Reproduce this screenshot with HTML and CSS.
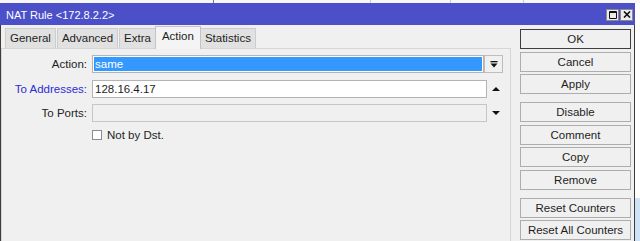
FILE: index.html
```html
<!DOCTYPE html>
<html lang="en">
<head>
  <meta charset="UTF-8" />
  <title>NAT Rule</title>
  <link rel="stylesheet" href="styles.css">
</head>
<body>

  <div class="backdrop-top"></div>
  <div class="screen">
    <div class="window">
      <div class="titlebar">
        <span class="title">NAT Rule &lt;172.8.2.2&gt;</span>
        <div class="title-buttons">
          <span class="tbtn">
            <svg width="8" height="8" viewBox="0 0 8 8"><path d="M0.5 0.5h7v7h-7z M0.5 1.5h7" fill="none" stroke="#111" stroke-width="1"/></svg>
          </span>
          <span class="tbtn">
            <svg width="8" height="7" viewBox="0 0 8 7"><path d="M1 0.5l6 6M7 0.5l-6 6" fill="none" stroke="#111" stroke-width="1.6"/></svg>
          </span>
        </div>
      </div>

      <div class="body">
        <div class="tabs-area">
          <div class="tabs">
            <span class="tab">General</span>
            <span class="tab">Advanced</span>
            <span class="tab">Extra</span>
            <span class="tab active">Action</span>
            <span class="tab">Statistics</span>
          </div>

          <div class="pane">
            <div class="row">
              <span class="label">Action:</span>
              <div class="field select"><span class="selected">same</span></div>
              <span class="drop-btn">
                <svg width="8" height="7" viewBox="0 0 8 7"><rect x="0.5" y="0" width="7" height="1.3" fill="#111"/><path d="M0.5 2.5h7L4 6.5z" fill="#111"/></svg>
              </span>
            </div>
            <div class="row">
              <span class="label link">To Addresses:</span>
              <div class="field">128.16.4.17</div>
              <span class="spin">
                <svg width="8" height="4" viewBox="0 0 8 4"><path d="M0 4h8L4 0z" fill="#111"/></svg>
              </span>
            </div>
            <div class="row">
              <span class="label">To Ports:</span>
              <div class="field disabled"></div>
              <span class="spin">
                <svg width="8" height="4" viewBox="0 0 8 4"><path d="M0 0h8L4 4z" fill="#111"/></svg>
              </span>
            </div>
            <div class="check-row">
              <span class="checkbox"></span>
              <span>Not by Dst.</span>
            </div>
          </div>
        </div>

        <div class="buttons">
          <div class="btn default">OK</div>
          <div class="btn">Cancel</div>
          <div class="btn">Apply</div>
          <div class="btn group-gap">Disable</div>
          <div class="btn">Comment</div>
          <div class="btn">Copy</div>
          <div class="btn">Remove</div>
          <div class="btn group-gap">Reset Counters</div>
          <div class="btn">Reset All Counters</div>
        </div>
      </div>
    </div>
    <div class="backdrop-side"></div>
  </div>

</body>
</html>
```

FILE: styles.css
```css
* { box-sizing: border-box; }
html, body { margin: 0; height: 241px; overflow: hidden; }
body { background: #f6f6f6; font-family: "Liberation Sans", Arial, sans-serif; font-size: 11.5px; color: #1e1e1e; }

.backdrop-top {
  height: 3px;
  background-color: #f7f7f7;
  background-image:
    linear-gradient(to right, transparent 213px, #777 213px, #777 214px, transparent 214px),
    linear-gradient(to right, transparent 370px, #ccc 370px, #ccc 371px, transparent 371px),
    linear-gradient(to right, transparent 450px, #ccc 450px, #ccc 451px, transparent 451px),
    linear-gradient(to right, transparent 523px, #ccc 523px, #ccc 524px, transparent 524px);
}
.screen { display: flex; height: 238px; }
.window { width: 635px; display: flex; flex-direction: column; }
.backdrop-side { flex: 1; background: linear-gradient(#fff 195px, #cfe2f6 195px); }

.titlebar { height: 22px; background: #4b50c9; color: #fff; display: flex; align-items: center; justify-content: space-between; padding: 1px 2px 0 6px; font-size: 11px; }
.title-buttons { display: flex; gap: 1px; }
.tbtn { width: 13px; height: 12px; background: #ececec; border: 1px solid #8a8a8a; display: flex; align-items: center; justify-content: center; }

.body { flex: 1; display: flex; background: #f0f0f0; border-left: 1px solid #3c3c3c; border-right: 1px solid #3c3c3c; }
.tabs-area { width: 510px; display: flex; flex-direction: column; }
.tabs { height: 23px; display: flex; align-items: flex-end; padding-left: 4px; }
.tab { height: 20px; padding: 0 4px; margin-right: 1px; line-height: 19px; background: #e1e1e1; border: 1px solid #cdcdcd; border-bottom: none; white-space: nowrap; }
.tab.active { position: relative; z-index: 1; height: 23px; margin: 0 -1px -1px -2px; padding: 0 6px; background: #f4f4f4; border-color: #c4c4c4; }

.pane { flex: 1; border: 1px solid #d6d6d6; border-bottom: none; background: #f0f0f0; padding: 6px 5px 0 0; }
.row { display: flex; align-items: center; height: 18px; margin-bottom: 6.5px; }
.label { width: 85px; margin-right: 5px; text-align: right; white-space: nowrap; }
.label.link { color: #2d2dd4; }
.field { flex: 1; height: 18px; border: 1px solid #b4b4b4; background: #fff; padding: 1px 1px 1px 2px; display: flex; align-items: center; }
.field.select { padding-left: 1px; }
.field.select .selected { flex: 1; align-self: stretch; background: #3399ff; color: #fff; padding-left: 1px; line-height: 14px; }
.field.disabled { background: #f0f0f0; border-color: #c6c6c6; }
.drop-btn { width: 19px; height: 18px; margin-right: 2px; border: 1px solid #bdbdbd; background: #f0f0f0; display: flex; align-items: center; justify-content: center; }
.spin { width: 18px; display: flex; justify-content: center; }

.check-row { display: flex; align-items: center; gap: 5px; height: 12px; padding-left: 90px; }
.checkbox { width: 10px; height: 10px; border: 1px solid #8c8c8c; background: #fff; }

.buttons { width: 111px; margin-left: 9px; padding-top: 4px; display: flex; flex-direction: column; gap: 2.5px; }
.btn { height: 20px; border: 1px solid #adadad; background: #f0f0f0; text-align: center; line-height: 18px; white-space: nowrap; }
.btn.default { border-color: #3e3e3e; }
.btn.group-gap { margin-top: 5.5px; }
```
